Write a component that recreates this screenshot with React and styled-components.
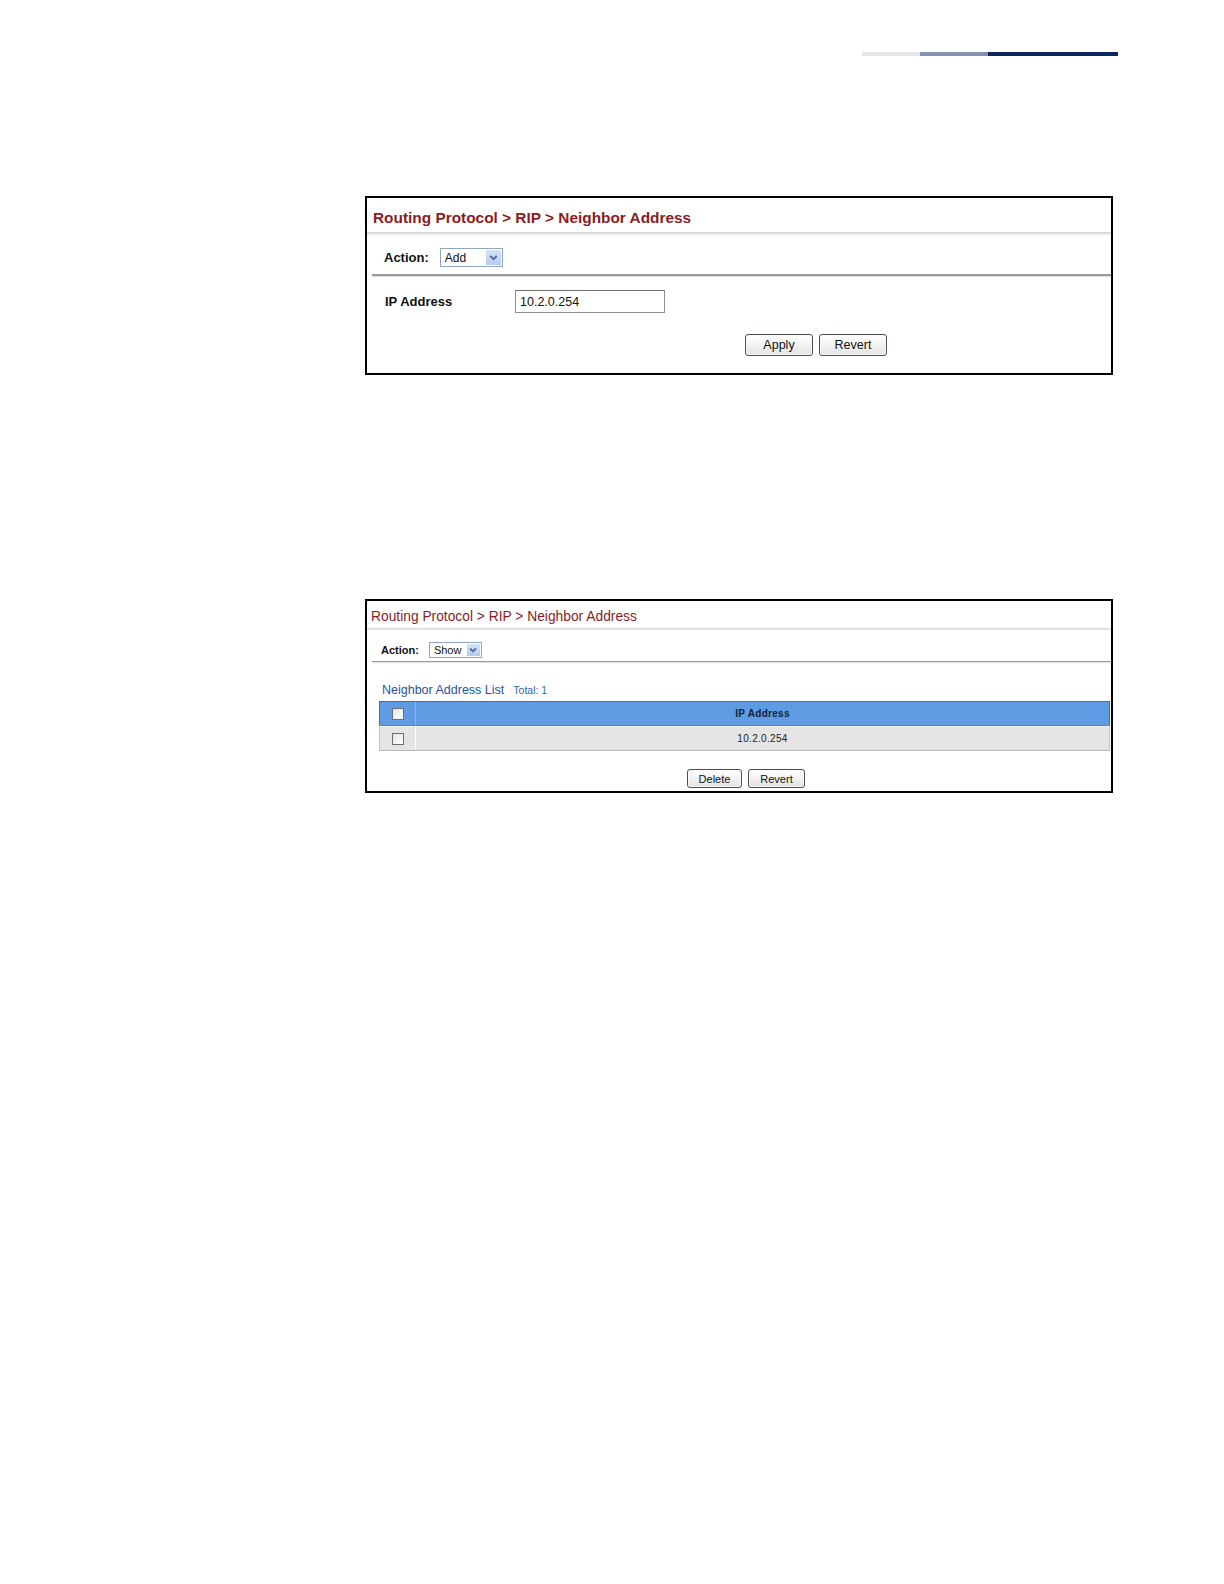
import React from 'react';
import styled, { createGlobalStyle } from 'styled-components';

const GlobalStyle = createGlobalStyle`
    body {
        margin: 0;
        background: #ffffff;
        font-family: "Liberation Sans", Arial, sans-serif;
    }
`;

const Root = styled.div`
    width: 1224px;
    min-height: 1584px;
    background: #ffffff;
    display: flex;
    flex-direction: column;
`;

const TopBar = styled.div`
    display: flex;
    justify-content: flex-end;
    padding: 52px 106px 0 0;
`;

const BarPart = styled.div`
    width: ${p => p.w}px;
    height: 4px;
    background: ${p => p.color};
`;

const Panel = styled.section`
    box-sizing: border-box;
    width: 748px;
    margin-left: 365px;
    margin-top: ${p => p.top}px;
    border: 2px solid #000;
    background: #fff;
    display: flex;
    flex-direction: column;
    padding-bottom: ${p => p.bottom}px;
`;

const Header = styled.div`
    height: ${p => p.h}px;
    box-sizing: border-box;
    padding: ${p => p.pt}px 0 0 ${p => p.pl}px;
    display: flex;
    align-items: center;
`;

const Title = styled.h2`
    margin: 0;
    font-size: ${p => p.size}px;
    font-weight: ${p => (p.bold ? 700 : 400)};
    color: #8a1c24;
    letter-spacing: 0;
`;

const HeaderShadow = styled.div`
    height: ${p => p.h}px;
    background: linear-gradient(to bottom, #cfcfcf, #f4f4f4 70%, #ffffff);
`;

const ActionRow = styled.div`
    display: flex;
    align-items: center;
    gap: ${p => p.gap}px;
    height: ${p => p.h}px;
    padding-left: ${p => p.pl}px;
    padding-top: ${p => p.pt || 0}px;
    box-sizing: border-box;
`;

const Label = styled.span`
    font-size: ${p => p.size}px;
    font-weight: 700;
    color: #111;
    width: ${p => (p.w ? `${p.w}px` : 'auto')};
`;

const Select = styled.div`
    box-sizing: border-box;
    width: ${p => p.w}px;
    height: ${p => p.h}px;
    border: 1px solid #8ea4c0;
    background: #fff;
    display: flex;
    align-items: center;
    justify-content: space-between;
    padding-left: 4px;
    font-size: ${p => p.size}px;
    color: #111;
`;

const SelectArrow = styled.span`
    width: ${p => p.w}px;
    height: 100%;
    box-sizing: border-box;
    border: 1px solid #fff;
    background: linear-gradient(to bottom, #d6e3f7, #b6cdee);
    display: flex;
    align-items: center;
    justify-content: center;
`;

const Divider = styled.div`
    margin-left: 5px;
    height: ${p => p.h}px;
    background: #9a9a9a;
    box-shadow: 0 1px 1px #dcdcdc;
`;

const FormRow = styled.div`
    display: flex;
    align-items: center;
    padding: 14px 0 0 18px;
`;

const TextInput = styled.div`
    box-sizing: border-box;
    width: 150px;
    height: 23px;
    border: 1px solid #8e8e8e;
    border-top-color: #6f6f6f;
    display: flex;
    align-items: center;
    padding-left: 4px;
    font-size: 12.5px;
    color: #111;
`;

const ButtonRow = styled.div`
    display: flex;
    gap: 6px;
    margin-top: ${p => p.mt}px;
    padding-left: ${p => p.pl}px;
`;

const Button = styled.button`
    box-sizing: border-box;
    width: ${p => p.w}px;
    height: ${p => p.h}px;
    padding: 0;
    border: 1px solid #4a4f57;
    border-radius: 3px;
    background: linear-gradient(to bottom, #ffffff, #f2f2f2 50%, #e2e2e2);
    font-family: "Liberation Sans", Arial, sans-serif;
    font-size: ${p => p.size}px;
    color: #111;
    box-shadow: inset 0 0 0 1px #fafafa;
`;

const ListTitle = styled.div`
    display: flex;
    align-items: baseline;
    gap: 9px;
    margin-top: 21px;
    padding-left: 15px;
    line-height: 14px;
`;

const ListName = styled.span`
    font-size: 12.5px;
    color: #2752a0;
`;

const ListTotal = styled.span`
    font-size: 10.5px;
    color: #2f62b8;
`;

const Table = styled.div`
    margin: 4px 1px 0 12px;
    display: flex;
    flex-direction: column;
`;

const TableRow = styled.div`
    display: grid;
    grid-template-columns: 37px 1fr;
    height: 25px;
    box-sizing: border-box;
    background: ${p => (p.head ? '#5e9be2' : '#e5e5e5')};
    border-top: 1px solid ${p => (p.head ? '#3d6fb8' : '#f3f3f3')};
    border-bottom: 1px solid ${p => (p.head ? '#4d86cf' : '#b9b9b9')};
`;

const CheckCell = styled.div`
    display: flex;
    align-items: center;
    justify-content: center;
    border-right: 1px solid ${p => (p.head ? '#8db8ec' : '#fbfbfb')};
    border-left: 1px solid ${p => (p.head ? '#3d6fb8' : '#c6c6c6')};
`;

const Cell = styled.div`
    display: flex;
    align-items: center;
    justify-content: center;
    font-size: 10px;
    font-weight: ${p => (p.head ? 700 : 400)};
    color: ${p => (p.head ? '#0f1f3d' : '#222')};
    letter-spacing: 0.3px;
    border-right: 1px solid ${p => (p.head ? '#3d6fb8' : '#c6c6c6')};
`;

const Checkbox = styled.span`
    width: 12px;
    height: 12px;
    box-sizing: border-box;
    border: 1px solid #6e6e6e;
    background: linear-gradient(135deg, #e4e4e4, #ffffff);
`;

function Chevron({ size }) {
  return (
    <svg width={size} height={size} viewBox="0 0 10 10">
      <path d="M2 3.5 L5 6.5 L8 3.5" fill="none" stroke="#4a6fa8" strokeWidth="1.8" />
    </svg>
  );
}

function App() {
  return (
    <Root>
      <GlobalStyle />
      <TopBar>
        <BarPart w={58} color="#e6e6ea" />
        <BarPart w={68} color="#8392b1" />
        <BarPart w={130} color="#0b2662" />
      </TopBar>

      <Panel top={140} bottom={17}>
        <Header h={34} pt={6} pl={6}>
          <Title size={15.4} bold>Routing Protocol &gt; RIP &gt; Neighbor Address</Title>
        </Header>
        <HeaderShadow h={4} />
        <ActionRow h={38} pl={17} pt={5} gap={11}>
          <Label size={13}>Action:</Label>
          <Select w={63} h={19} size={12}>
            Add
            <SelectArrow w={17}>
              <Chevron size={11} />
            </SelectArrow>
          </Select>
        </ActionRow>
        <Divider h={2} />
        <FormRow>
          <Label size={13} w={130}>IP Address</Label>
          <TextInput>10.2.0.254</TextInput>
        </FormRow>
        <ButtonRow mt={21} pl={378}>
          <Button w={68} h={22} size={12.5}>Apply</Button>
          <Button w={68} h={22} size={12.5}>Revert</Button>
        </ButtonRow>
      </Panel>

      <Panel top={224} bottom={3}>
        <Header h={27} pt={4} pl={4}>
          <Title size={13.8}>Routing Protocol &gt; RIP &gt; Neighbor Address</Title>
        </Header>
        <HeaderShadow h={3} />
        <ActionRow h={30} pl={14} pt={7} gap={10}>
          <Label size={11}>Action:</Label>
          <Select w={53} h={16} size={11}>
            Show
            <SelectArrow w={15}>
              <Chevron size={10} />
            </SelectArrow>
          </Select>
        </ActionRow>
        <Divider h={1} />
        <ListTitle>
          <ListName>Neighbor Address List</ListName>
          <ListTotal>Total: 1</ListTotal>
        </ListTitle>
        <Table>
          <TableRow head>
            <CheckCell head><Checkbox /></CheckCell>
            <Cell head>IP Address</Cell>
          </TableRow>
          <TableRow>
            <CheckCell><Checkbox /></CheckCell>
            <Cell>10.2.0.254</Cell>
          </TableRow>
        </Table>
        <ButtonRow mt={18} pl={320}>
          <Button w={55} h={19} size={11}>Delete</Button>
          <Button w={57} h={19} size={11}>Revert</Button>
        </ButtonRow>
      </Panel>
    </Root>
  );
}

export default App;
